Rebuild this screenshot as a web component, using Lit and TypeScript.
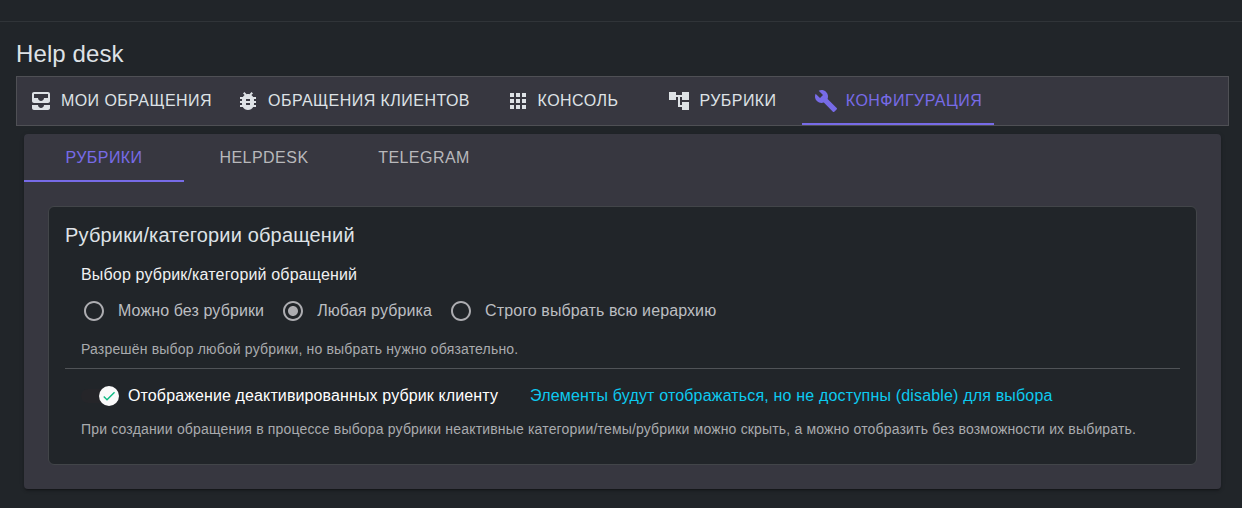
import { LitElement, html, css, svg } from "lit";
import { customElement, property, state } from "lit/decorators.js";
import { classMap } from "lit/directives/class-map.js";

const ICONS: Record<string, string> = {
  inbox:
    "M19 3H5c-1.1 0-2 .9-2 2v7c0 1.1.9 2 2 2h14c1.1 0 2-.9 2-2V5c0-1.1-.9-2-2-2zm0 6h-4c0 1.62-1.38 3-3 3s-3-1.38-3-3H5V5h14v4zm-4 7h6v3c0 1.1-.9 2-2 2H5c-1.1 0-2-.9-2-2v-3h6c0 1.66 1.34 3 3 3s3-1.34 3-3z",
  bug: "M20 8h-2.81c-.45-.78-1.07-1.45-1.82-1.96L17 4.41 15.59 3l-2.17 2.17C12.96 5.06 12.49 5 12 5c-.49 0-.96.06-1.41.17L8.41 3 7 4.41l1.62 1.63C7.88 6.55 7.26 7.22 6.81 8H4v2h2.09c-.05.33-.09.66-.09 1v1H4v2h2v1c0 .34.04.67.09 1H4v2h2.81c1.04 1.79 2.97 3 5.19 3s4.15-1.21 5.19-3H20v-2h-2.09c.05-.33.09-.66.09-1v-1h2v-2h-2v-1c0-.34-.04-.67-.09-1H20V8zm-6 8h-4v-2h4v2zm0-4h-4v-2h4v2z",
  apps: "M4 8h4V4H4v4zm6 12h4v-4h-4v4zm-6 0h4v-4H4v4zm0-6h4v-4H4v4zm6 0h4v-4h-4v4zm6-10v4h4V4h-4zm-6 4h4V4h-4v4zm6 6h4v-4h-4v4zm0 6h4v-4h-4v4z",
  tree: "M22 11V3h-7v3H9V3H2v8h7V8h2v10h4v3h7v-8h-7v3h-2V8h2v3z",
  build:
    "M22.7 19l-9.1-9.1c.9-2.3.4-5-1.5-6.9-2-2-5-2.4-7.4-1.3L9 6 6 9 1.6 4.7C.4 7.1.9 10.1 2.9 12.1c1.9 1.9 4.6 2.4 6.9 1.5l9.1 9.1c.4.4 1 .4 1.4 0l2.3-2.3c.5-.4.5-1.1.1-1.4z",
  radioOff:
    "M12 2C6.48 2 2 6.48 2 12s4.48 10 10 10 10-4.48 10-10S17.52 2 12 2zm0 18c-4.42 0-8-3.58-8-8s3.58-8 8-8 8 3.58 8 8-3.58 8-8 8z",
  radioOn:
    "M12 7c-2.76 0-5 2.24-5 5s2.24 5 5 5 5-2.24 5-5-2.24-5-5-5zm0-5C6.48 2 2 6.48 2 12s4.48 10 10 10 10-4.48 10-10S17.52 2 12 2zm0 18c-4.42 0-8-3.58-8-8s3.58-8 8-8 8 3.58 8 8-3.58 8-8 8z",
  check: "M9 16.17L4.83 12l-1.42 1.41L9 19 21 7l-1.41-1.41z",
};

@customElement("ui-icon")
class UiIcon extends LitElement {
  @property() name = "";
  static styles = css`
    :host {
      display: block;
      flex: none;
      width: 24px;
      height: 24px;
    }
    svg {
      display: block;
      width: 100%;
      height: 100%;
      fill: currentColor;
    }
  `;
  render() {
    return html`<svg viewBox="0 0 24 24" aria-hidden="true">${svg`<path d=${ICONS[this.name] ?? ""}></path>`}</svg>`;
  }
}

interface Tab {
  label: string;
  icon?: string;
  width: number;
}

@customElement("ui-tabs")
class UiTabs extends LitElement {
  @property({ attribute: false }) tabs: Tab[] = [];
  @property({ type: Number }) active = 0;
  static styles = css`
    :host {
      display: block;
    }
    .bar {
      display: flex;
      height: 48px;
    }
    .tab {
      box-sizing: border-box;
      height: 48px;
      display: flex;
      align-items: center;
      justify-content: center;
      gap: 8px;
      padding-top: 2px;
      border-bottom: 2px solid transparent;
      font-size: 16px;
      line-height: 24px;
      letter-spacing: 0.457px;
      white-space: nowrap;
      text-transform: uppercase;
      cursor: pointer;
    }
    .active {
      color: #776be7;
      border-bottom-color: #776be7;
    }
  `;
  render() {
    return html`<div class="bar" role="tablist">
      ${this.tabs.map(
        (t, i) => html`<div
          role="tab"
          class=${classMap({ tab: true, active: i === this.active })}
          style="width:${t.width}px"
          @click=${() => (this.active = i)}
        >
          ${t.icon ? html`<ui-icon name=${t.icon}></ui-icon>` : null}
          <span>${t.label}</span>
        </div>`
      )}
    </div>`;
  }
}

@customElement("app-root")
class AppRoot extends LitElement {
  @state() private choice = 1;

  private mainTabs: Tab[] = [
    { label: "Мои обращения", icon: "inbox", width: 207 },
    { label: "Обращения клиентов", icon: "bug", width: 258 },
    { label: "Консоль", icon: "apps", width: 160 },
    { label: "Рубрики", icon: "tree", width: 160 },
    { label: "Конфигурация", icon: "build", width: 192 },
  ];
  private subTabs: Tab[] = [
    { label: "Рубрики", width: 160 },
    { label: "HelpDesk", width: 160 },
    { label: "Telegram", width: 160 },
  ];
  private options = ["Можно без рубрики", "Любая рубрика", "Строго выбрать всю иерархию"];

  static styles = css`
    :host {
      display: block;
      box-sizing: border-box;
      height: 508px;
      overflow: hidden;
      background: #212529;
      color: #dee2e6;
      font-family: "Liberation Sans", Arial, sans-serif;
      font-size: 16px;
      line-height: 24px;
    }
    .top {
      height: 21px;
      border-bottom: 1px solid #303438;
    }
    .page {
      padding: 17px 13px 0 16px;
    }
    .heading {
      font-size: 24px;
      line-height: 29px;
      height: 37px;
      letter-spacing: 0.1px;
    }
    .main-tabs {
      background: #373740;
      border: 1px solid #4f5055;
    }
    .card {
      margin: 8px 8px 0;
      height: 355px;
      border-radius: 4px;
      background: #373740;
      box-shadow: 0 3px 1px -2px rgba(0, 0, 0, 0.2), 0 2px 2px 0 rgba(0, 0, 0, 0.14),
        0 1px 5px 0 rgba(0, 0, 0, 0.12);
    }
    .sub-tabs {
      color: #b8b8bb;
    }
    .panel {
      box-sizing: border-box;
      margin: 24px 24px 0;
      height: 259px;
      padding: 16px;
      border: 1px solid #424549;
      border-radius: 6px;
      background: #212529;
      letter-spacing: 0.165px;
    }
    .panel-title {
      font-size: 20px;
      line-height: 24px;
      height: 39px;
    }
    .field {
      padding: 0 16px;
    }
    .field-name {
      box-sizing: border-box;
      height: 25px;
      padding-top: 1px;
      color: #f0f1f2;
    }
    .radios {
      display: flex;
      height: 48px;
      align-items: center;
      color: #bcbec1;
      letter-spacing: 0.11px;
    }
    .radio {
      display: flex;
      align-items: center;
      padding-left: 1px;
      margin-right: 16px;
      cursor: pointer;
    }
    .radio ui-icon {
      color: #adadb1;
      margin-right: 12px;
    }
    .hint {
      font-size: 14px;
      line-height: 20px;
      letter-spacing: 0.17px;
      color: #a9abae;
    }
    .hint.first {
      box-sizing: border-box;
      height: 33px;
      padding-top: 4px;
    }
    .rule {
      height: 1px;
      background: #505357;
    }
    .toggle-row {
      box-sizing: border-box;
      display: flex;
      align-items: center;
      height: 50px;
      padding: 3px 0 0 16px;
      white-space: nowrap;
    }
    .switch {
      display: flex;
      align-items: center;
      width: 34px;
      height: 14px;
      border-radius: 7px;
      background: #252529;
      margin-right: 13px;
    }
    .thumb {
      flex: none;
      display: flex;
      align-items: center;
      justify-content: center;
      width: 20px;
      height: 20px;
      margin-left: 18px;
      border-radius: 50%;
      background: #fafafa;
      color: #0bba83;
    }
    .thumb ui-icon {
      width: 16px;
      height: 16px;
    }
    .toggle-label {
      color: #fff;
      letter-spacing: 0.12px;
      margin-right: 32px;
    }
    .info {
      color: #0dcaf0;
      letter-spacing: 0.17px;
    }
  `;

  render() {
    return html`
      <div class="top"></div>
      <div class="page">
        <div class="heading">Help desk</div>
        <div class="main-tabs"><ui-tabs .tabs=${this.mainTabs} .active=${4}></ui-tabs></div>
        <div class="card">
          <div class="sub-tabs"><ui-tabs .tabs=${this.subTabs} .active=${0}></ui-tabs></div>
          <div class="panel">
            <div class="panel-title">Рубрики/категории обращений</div>
            <div class="field">
              <div class="field-name">Выбор рубрик/категорий обращений</div>
              <div class="radios">
                ${this.options.map(
                  (o, i) => html`<div class="radio" @click=${() => (this.choice = i)}>
                    <ui-icon name=${i === this.choice ? "radioOn" : "radioOff"}></ui-icon>
                    <span>${o}</span>
                  </div>`
                )}
              </div>
              <div class="hint first">Разрешён выбор любой рубрики, но выбрать нужно обязательно.</div>
            </div>
            <div class="rule"></div>
            <div class="toggle-row">
              <div class="switch"><div class="thumb"><ui-icon name="check"></ui-icon></div></div>
              <span class="toggle-label">Отображение деактивированных рубрик клиенту</span>
              <span class="info">Элементы будут отображаться, но не доступны (disable) для выбора</span>
            </div>
            <div class="field hint">
              При создании обращения в процессе выбора рубрики неактивные категории/темы/рубрики можно скрыть, а можно
              отобразить без возможности их выбирать.
            </div>
          </div>
        </div>
      </div>
    `;
  }
}
